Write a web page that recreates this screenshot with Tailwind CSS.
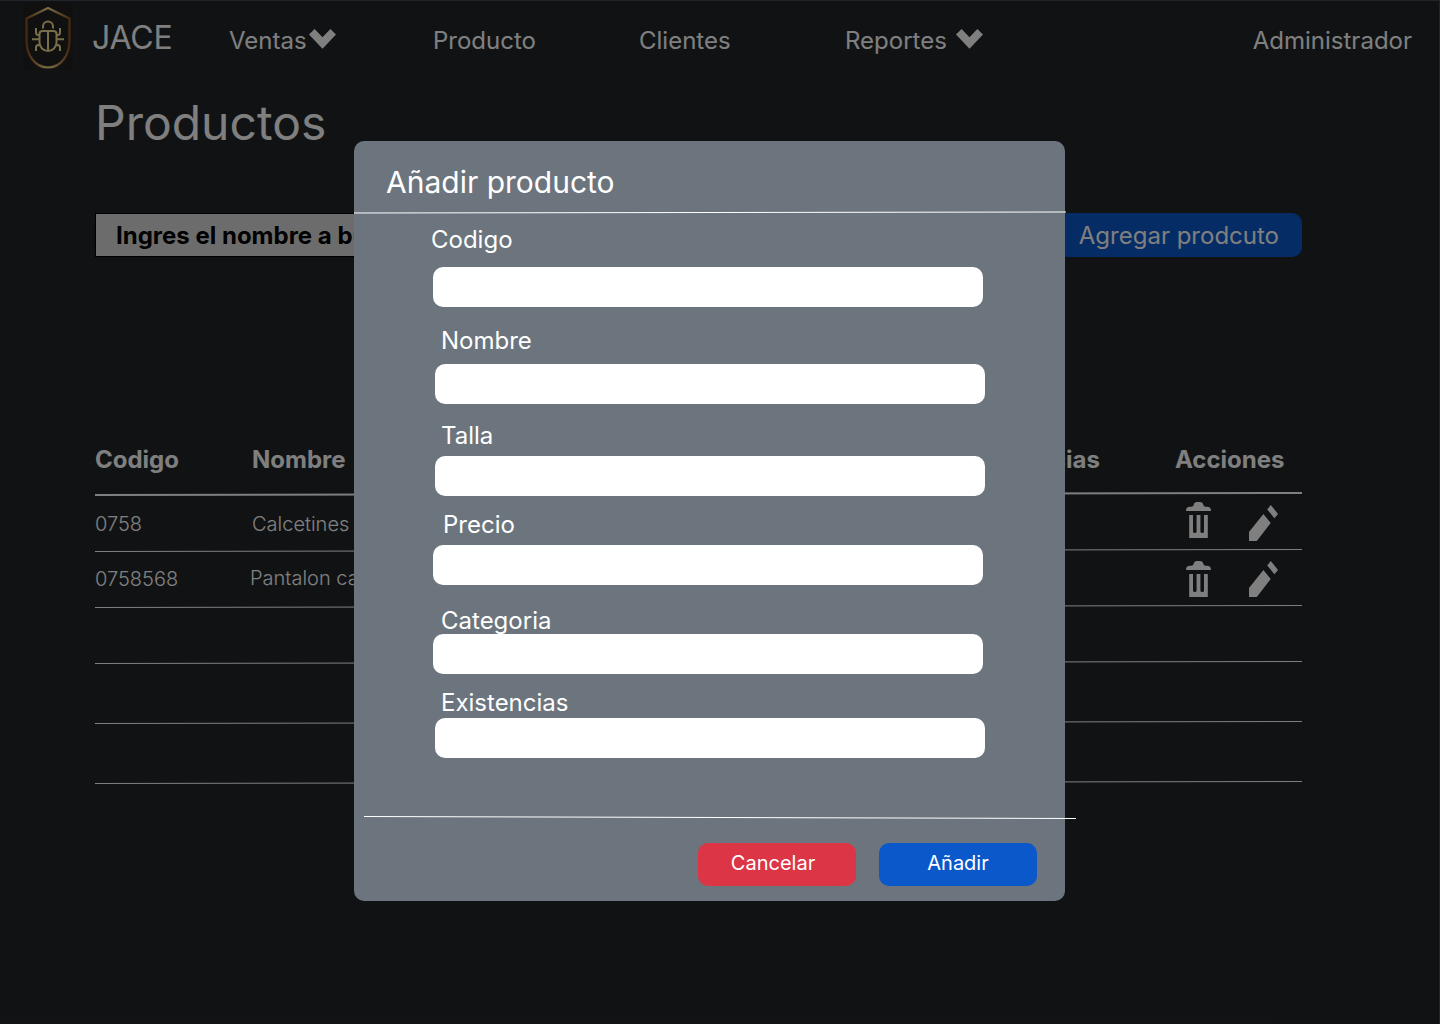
<!DOCTYPE html>
<html lang="es">
<head>
<meta charset="utf-8">
<title>JACE - Productos</title>
<script src="https://cdn.jsdelivr.net/npm/@tailwindcss/browser@4"></script>
</head>
<body class="relative h-[1024px] w-[1440px] overflow-hidden bg-[#212529] font-['Inter',sans-serif] text-white">
<svg class="hidden">
  <symbol id="chevron" viewBox="0 0 27 20"><path fill="currentColor" d="M0 5.5 5.6 0l7.9 8.2L21.4 0 27 5.5 13.5 19.8Z"/></symbol>
  <symbol id="trash" viewBox="0 0 25 36"><path fill="currentColor" d="M0 9Q0 4.700 4 4.700H5.500Q7.300 4.700 7.600 3Q8.200 0 11 0H14Q16.800 0 17.400 3Q17.700 4.700 19.500 4.700H21Q25 4.700 25 9ZM3.200 13H7V29.500Q7 31 8.800 31T10.600 29.500V13H14.400V29.500Q14.400 31 16.200 31T18 29.500V13H21.800V36H3.200Z"/></symbol>
  <symbol id="pencil" viewBox="0 0 29 36"><path fill="currentColor" d="M14.4 9 21.7 18 7.8 36H0V27ZM21.8 0 29 9 25.4 13.3 18.2 4.4Z"/></symbol>
</svg>

<header class="flex h-20 items-start text-2xl/[29px]">
  <svg class="ml-[23px] mt-[3px] h-[67px] w-[50px] shrink-0" viewBox="0 0 50 67" fill="none">
    <defs><linearGradient id="gold" x1="0" x2="1"><stop stop-color="#8a5420"/><stop offset=".5" stop-color="#f0dc90"/><stop offset="1" stop-color="#8a5420"/></linearGradient></defs>
    <rect width="50" height="67" fill="#212121"/>
    <path stroke="url(#gold)" stroke-width="2.2" d="M25 5 46.500 15.500V38C46.500 52 38 64.500 25 64.500S3.500 52 3.500 38V15.500Z"/>
    <g stroke="#f0dc90" stroke-width="2">
      <path d="M20 25.500V23.500a5 5 0 0 1 10 0v2M19.500 28H30.500a3 3 0 0 1 3 3V39.500a8.500 8.500 0 0 1-17 0V31a3 3 0 0 1 3-3ZM25 28V48M9 36.300H16.500M33.500 36.300H41M13 25V29.500a2.500 2.500 0 0 0 2.500 2.500H17M37 25V29.500a2.500 2.500 0 0 1-2.500 2.500H33M17 42H15.500a2.500 2.500 0 0 0-2.500 2.500V48M33 42h1.500a2.500 2.500 0 0 1 2.500 2.500V48"/>
    </g>
  </svg>
  <div class="mt-[18px] ml-[19px] w-[137px] text-[32px]/[39px] tracking-[-0.2px]">JACE</div>
  <nav class="mt-[26px] flex">
    <a class="flex w-[204px]">Ventas<svg class="ml-[2px] mt-[3px] h-5 w-[27px]"><use href="#chevron"/></svg></a>
    <a class="w-[206px]">Producto</a>
    <a class="w-[206px]">Clientes</a>
    <a class="flex">Reportes<svg class="ml-[9px] mt-[3px] h-5 w-[27px]"><use href="#chevron"/></svg></a>
  </nav>
  <div class="mt-[26px] mr-7 ml-auto">Administrador</div>
</header>

<main class="ml-[95px] w-[1207px]">
  <h1 class="pt-[14px] text-5xl/[58px]">Productos</h1>
  <div class="mt-[61px] flex h-11 justify-between text-2xl/[29px]">
    <div class="w-[500px] border border-black bg-[#d9d9d9] pt-[7px] pl-5 font-bold text-black shadow-md">Ingres el nombre a buscar</div>
    <button class="flex w-[245px] justify-end rounded-[10px] bg-[#0a58ca] pt-2 pr-[23px]">Agregar prodcuto</button>
  </div>

  <section class="mt-[188px] text-xl/6 font-light">
    <div class="flex h-[47px] text-2xl/[29px] font-bold">
      <div class="w-[157px]">Codigo</div>
      <div class="w-[848px] flex justify-between"><span>Nombre</span><span>Existencias</span></div>
      <div class="ml-auto w-[127px]">Acciones</div>
    </div>
    <svg class="block h-1 w-full" viewBox="0 0 1207 4"><path stroke="white" stroke-width="2" d="M0 3 1207 1"/></svg>
    <div class="flex h-[53px] pt-4">
      <div class="w-[157px]">0758</div><div>Calcetines</div>
      <div class="-mt-[10px] mr-6 ml-auto flex items-start"><svg class="h-9 w-[25px]"><use href="#trash"/></svg><svg class="mt-[3px] ml-[38px] h-9 w-[29px]"><use href="#pencil"/></svg></div>
    </div>
    <svg class="block h-[3px] w-full" viewBox="0 0 1207 3"><path stroke="white" d="M0 2.500 1207 .5"/></svg>
    <div class="flex h-[53px] pt-[14px]">
      <div class="w-[155px] pt-px">0758568</div><div>Pantalon cafe</div>
      <div class="-mt-[5px] mr-6 ml-auto flex items-start"><svg class="h-9 w-[25px]"><use href="#trash"/></svg><svg class="ml-[38px] h-9 w-[29px]"><use href="#pencil"/></svg></div>
    </div>
    <svg class="block h-[3px] w-full" viewBox="0 0 1207 3"><path stroke="white" d="M0 2.500 1207 .5"/></svg>
    <svg class="mt-[53px] block h-[3px] w-full" viewBox="0 0 1207 3"><path stroke="white" d="M0 2.500 1207 .5"/></svg>
    <svg class="mt-[57px] block h-[3px] w-full" viewBox="0 0 1207 3"><path stroke="white" d="M0 2.500 1207 .5"/></svg>
    <svg class="mt-[57px] block h-[3px] w-full" viewBox="0 0 1207 3"><path stroke="white" d="M0 2.500 1207 .5"/></svg>
  </section>
</main>

<div class="absolute top-px right-px bottom-0 left-0 bg-black/50"></div>

<div class="absolute top-[141px] left-[354px] flex h-[760px] w-[711px] flex-col rounded-[10px] bg-[#6c757d]">
  <h2 class="h-[70px] pt-[23px] pl-8 text-[30px]/[36px]">Añadir producto</h2>
  <svg class="block h-[3px] w-[712px] shrink-0" viewBox="0 0 712 3"><path stroke="white" d="M0 2 712 1"/></svg>
  <form class="h-[601px] pt-[11px] pl-[79px] text-2xl/[29px]">
    <label class="-ml-[2px] block h-[42px]">Codigo</label><div class="h-10 w-[550px] rounded-[10px] bg-white"></div>
    <label class="mt-[19px] ml-2 block h-[38px]">Nombre</label><div class="ml-[2px] h-10 w-[549.5px] rounded-[10px] bg-white"></div>
    <label class="mt-[17px] ml-2 block h-[35px]">Talla</label><div class="ml-[2px] h-10 w-[549.5px] rounded-[10px] bg-white"></div>
    <label class="mt-[14px] ml-[10px] block h-[35px]">Precio</label><div class="h-10 w-[549.5px] rounded-[10px] bg-white"></div>
    <label class="mt-[21px] ml-2 block h-7">Categoria</label><div class="h-10 w-[549.5px] rounded-[10px] bg-white"></div>
    <label class="mt-[14px] ml-2 block h-[30px]">Existencias</label><div class="ml-[2px] h-10 w-[549.5px] rounded-[10px] bg-white"></div>
  </form>
  <svg class="ml-[10px] block h-1 w-[712px] shrink-0" viewBox="0 0 712 4"><path stroke="white" d="M0 1.500 712 3.500"/></svg>
  <div class="mt-6 mr-7 flex justify-end gap-[23px] text-xl/6">
    <button class="h-[43px] w-[158px] rounded-[10px] bg-[#dc3545] pr-2 pb-[3px]">Cancelar</button>
    <button class="h-[43px] w-[158px] rounded-[10px] bg-[#0a58ca] pb-[3px]">Añadir</button>
  </div>
</div>
</body>
</html>
